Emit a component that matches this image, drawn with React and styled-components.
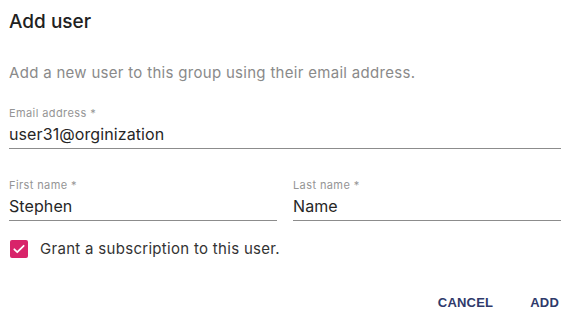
import React from "react";
import styled, { createGlobalStyle } from "styled-components";

const Global = createGlobalStyle`
  body {
    margin: 0;
    background: #ffffff;
    font-family: "Inter", "Roboto", sans-serif;
  }
`;

const Dialog = styled.div`
  width: 575px;
  height: 317px;
  box-sizing: border-box;
  padding: 10px 14px 0 9px;
  display: flex;
  flex-direction: column;
`;

const Title = styled.h2`
  margin: 0;
  font-size: 19px;
  line-height: 24px;
  font-weight: 500;
  color: #212121;
`;

const Description = styled.p`
  margin: 29px 0 0;
  font-size: 15px;
  line-height: 20px;
  letter-spacing: 0.3px;
  color: #8a8a8a;
`;

const Row = styled.div`
  display: flex;
  gap: 16px;
  margin-top: ${(p) => p.$top}px;
`;

const Field = styled.label`
  flex: 1;
  display: flex;
  flex-direction: column;
  border-bottom: 1px solid #8c8c8c;
  padding-bottom: 4px;
`;

const Label = styled.span`
  font-size: 11px;
  line-height: 14px;
  letter-spacing: 0.4px;
  color: #959595;
`;

const Value = styled.span`
  margin-top: 4px;
  font-size: 16px;
  line-height: 20px;
  letter-spacing: 0.1px;
  color: #262626;
`;

const CheckRow = styled.div`
  display: flex;
  align-items: center;
  gap: 12px;
  margin-top: 18px;
  margin-left: 1px;
`;

const Box = styled.span`
  width: 18px;
  height: 18px;
  border-radius: 2px;
  background: #d8246a;
  display: flex;
  align-items: center;
  justify-content: center;
`;

const CheckText = styled.span`
  font-size: 15px;
  letter-spacing: 0.3px;
  color: #333333;
`;

const Actions = styled.div`
  display: flex;
  justify-content: flex-end;
  gap: 37px;
  margin-top: 37px;
  padding-right: 2px;
`;

const Button = styled.button`
  border: none;
  background: none;
  padding: 0;
  font-family: "Liberation Sans", Arial, sans-serif;
  font-weight: 700;
  font-size: 13px;
  letter-spacing: 0.2px;
  color: #2f3a6b;
  text-transform: uppercase;
  cursor: pointer;
`;

export default function App() {
  return (
    <>
      <Global />
      <Dialog>
        <Title>Add user</Title>
        <Description>
          Add a new user to this group using their email address.
        </Description>
        <Row $top={23}>
          <Field>
            <Label>Email address *</Label>
            <Value>user31@orginization</Value>
          </Field>
        </Row>
        <Row $top={29}>
          <Field>
            <Label>First name *</Label>
            <Value>Stephen</Value>
          </Field>
          <Field>
            <Label>Last name *</Label>
            <Value>Name</Value>
          </Field>
        </Row>
        <CheckRow>
          <Box>
            <svg width="14" height="14" viewBox="0 0 24 24">
              <path
                d="M4 12.5l5 5L20 6.5"
                fill="none"
                stroke="#ffffff"
                strokeWidth="3"
                strokeLinecap="round"
                strokeLinejoin="round"
              />
            </svg>
          </Box>
          <CheckText>Grant a subscription to this user.</CheckText>
        </CheckRow>
        <Actions>
          <Button>Cancel</Button>
          <Button>Add</Button>
        </Actions>
      </Dialog>
    </>
  );
}
